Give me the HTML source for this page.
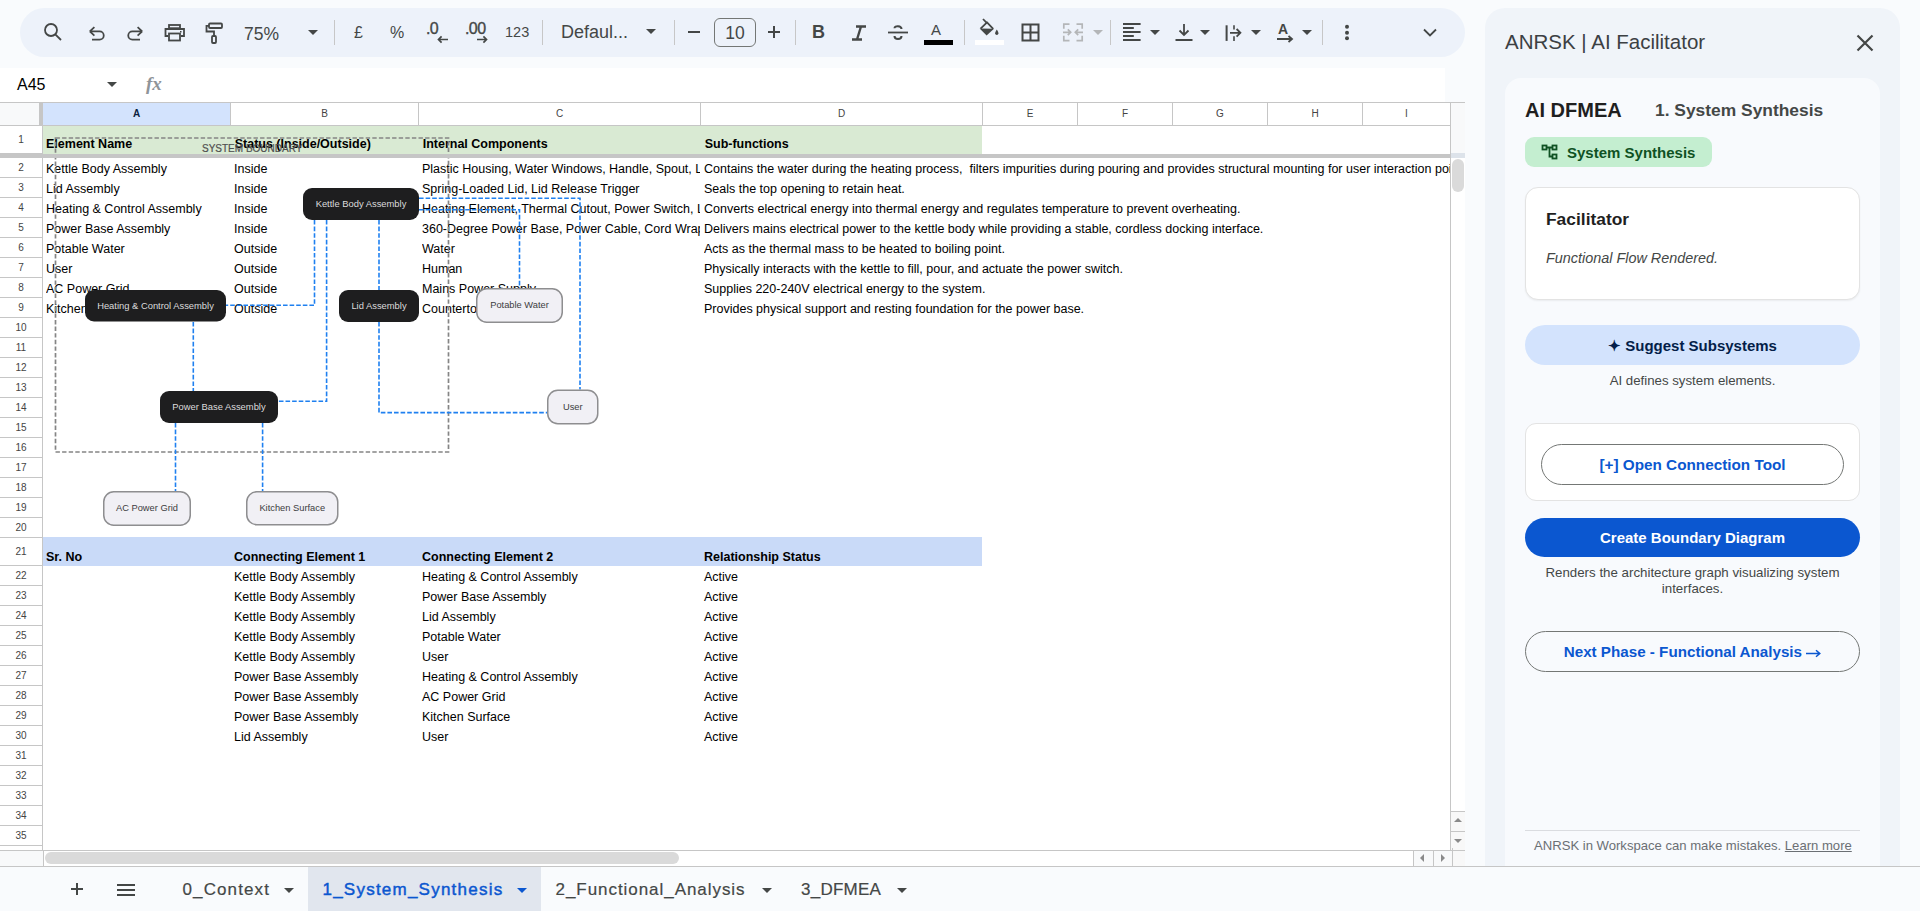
<!DOCTYPE html><html><head><meta charset="utf-8"><style>
*{box-sizing:border-box;margin:0;padding:0}
html,body{width:1920px;height:911px;overflow:hidden;background:#f9fbfd;font-family:"Liberation Sans", sans-serif;}
.a{position:absolute}
.t{position:absolute;white-space:nowrap;line-height:14px;font-size:12.5px;color:#000}
.b{font-weight:bold}
.rn{position:absolute;left:0;width:42px;text-align:center;font-size:10px;color:#444;line-height:12px}
.ch{position:absolute;top:103px;height:22px;text-align:center;font-size:10px;line-height:22px;color:#444}
.ico{position:absolute}
.dd{position:absolute;width:0;height:0;border-left:5px solid transparent;border-right:5px solid transparent;border-top:5px solid #444746}
.sep{position:absolute;top:20px;width:1px;height:25px;background:#c7c7c7}
</style></head><body>
<div class="a" style="left:20px;top:8px;width:1445px;height:49px;border-radius:25px;background:#edf2fa"></div>
<svg class="ico" style="left:43px;top:22px" width="20" height="20" viewBox="0 0 20 20"><circle cx="8" cy="8" r="6" fill="none" stroke="#444746" stroke-width="1.8"/><line x1="12.3" y1="12.3" x2="18" y2="18" stroke="#444746" stroke-width="1.8"/></svg>
<svg class="ico" style="left:88px;top:25px" width="18" height="17" viewBox="0 0 18 17"><path d="M1.8 6.4 L6.4 2.2 M1.8 6.4 L6.4 10.6 M1.8 6.4 H11.6 A4.15 4.15 0 0 1 11.6 14.7 H4" fill="none" stroke="#444746" stroke-width="1.8"/></svg>
<svg class="ico" style="left:127px;top:25px" width="18" height="17" viewBox="0 0 18 17"><path d="M15.2 6.4 L10.6 2.2 M15.2 6.4 L10.6 10.6 M15.2 6.4 H5.4 A4.15 4.15 0 0 0 5.4 14.7 H13" fill="none" stroke="#444746" stroke-width="1.8"/></svg>
<svg class="ico" style="left:164px;top:23px" width="22" height="19" viewBox="0 0 22 19"><rect x="5" y="2" width="11" height="3.2" fill="none" stroke="#444746" stroke-width="1.8"/><path d="M4 13 H1.5 V6 H20 V13 H17" fill="none" stroke="#444746" stroke-width="1.8"/><rect x="5" y="10.5" width="11" height="7" fill="none" stroke="#444746" stroke-width="1.8"/><rect x="16" y="8" width="1.5" height="1.5" fill="#444746"/></svg>
<svg class="ico" style="left:204px;top:22px" width="20" height="23" viewBox="0 0 20 23"><rect x="5" y="1.5" width="13" height="4.5" rx="1" fill="none" stroke="#444746" stroke-width="1.8"/><path d="M5 3.8 H2.5 V9.5 H10 V14" fill="none" stroke="#444746" stroke-width="1.8"/><rect x="8" y="14" width="4" height="7" rx="1" fill="none" stroke="#444746" stroke-width="1.8"/></svg>
<div class="t" style="left:244px;top:25px;font-size:17.5px;line-height:18px;color:#444746">75%</div>
<div class="dd" style="left:308px;top:30px"></div>
<div class="sep" style="left:334px"></div>
<div class="t" style="left:354px;top:24px;font-size:16px;line-height:18px;color:#444746">£</div>
<div class="t" style="left:390px;top:24px;font-size:16px;line-height:18px;color:#444746">%</div>
<div class="t" style="left:426px;top:21px;font-size:16px;line-height:16px;color:#444746;letter-spacing:-0.6px;-webkit-text-stroke:0.35px #444746">.0</div>
<svg class="ico" style="left:437px;top:35px" width="12" height="9" viewBox="0 0 12 9"><path d="M1.5 4.5 H11 M4.6 1.4 L1.5 4.5 L4.6 7.6" fill="none" stroke="#444746" stroke-width="1.7"/></svg>
<div class="t" style="left:465px;top:21px;font-size:16px;line-height:16px;color:#444746;letter-spacing:-0.6px;-webkit-text-stroke:0.35px #444746">.00</div>
<svg class="ico" style="left:476px;top:35px" width="12" height="9" viewBox="0 0 12 9"><path d="M1 4.5 H10.5 M7.4 1.4 L10.5 4.5 L7.4 7.6" fill="none" stroke="#444746" stroke-width="1.7"/></svg>
<div class="t" style="left:505px;top:24px;font-size:14.5px;line-height:16px;color:#444746">123</div>
<div class="sep" style="left:542px"></div>
<div class="t" style="left:561px;top:22px;font-size:18px;line-height:20px;color:#444746">Defaul...</div>
<div class="dd" style="left:646px;top:29px"></div>
<div class="sep" style="left:674px"></div>
<div class="a" style="left:688px;top:31px;width:12px;height:2px;background:#444746"></div>
<div class="a" style="left:714px;top:18px;width:42px;height:29px;border:1px solid #747775;border-radius:6px"></div>
<div class="t" style="left:714px;top:23px;width:42px;text-align:center;font-size:17.5px;line-height:20px;color:#444746">10</div>
<div class="a" style="left:768px;top:31px;width:12px;height:2px;background:#444746"></div>
<div class="a" style="left:773px;top:26px;width:2px;height:12px;background:#444746"></div>
<div class="sep" style="left:795px"></div>
<div class="t b" style="left:812px;top:23px;font-size:18px;line-height:18px;color:#444746">B</div>
<svg class="ico" style="left:851px;top:25px" width="16" height="16" viewBox="0 0 16 16"><path d="M5 1.5 H15 M1 14.5 H11 M10 1.5 L6 14.5" fill="none" stroke="#444746" stroke-width="2.4"/></svg>
<svg class="ico" style="left:887px;top:24px" width="22" height="17" viewBox="0 0 22 17"><line x1="1" y1="8.5" x2="21" y2="8.5" stroke="#444746" stroke-width="1.8"/><path d="M14.5 5 C14.5 1.5 7.5 1.2 7.5 4.2" fill="none" stroke="#444746" stroke-width="2"/><path d="M7.5 12 C7.5 16 14.5 16 14.5 12" fill="none" stroke="#444746" stroke-width="2"/></svg>
<div class="t" style="left:931px;top:22px;font-size:15px;line-height:16px;color:#444746">A</div>
<div class="a" style="left:924px;top:40px;width:29px;height:5px;background:#000"></div>
<div class="sep" style="left:964px"></div>
<svg class="ico" style="left:978px;top:18px" width="22" height="19" viewBox="0 0 22 19"><path d="M5 1 L9 5.2" stroke="#444746" stroke-width="1.8"/><path d="M2.6 10.6 L9 4.3 L15.2 10.8" fill="none" stroke="#444746" stroke-width="1.8" stroke-linejoin="round"/><path d="M1.6 10.6 L16 10.8 L8.6 17.6 Z" fill="#444746"/><path d="M18.8 11.5 C17.6 13.3 17.2 14.3 17.2 15.3 A1.6 1.6 0 0 0 20.4 15.3 C20.4 14.3 20 13.3 18.8 11.5 Z" fill="#444746"/></svg>
<div class="a" style="left:975px;top:40px;width:29px;height:5px;background:#fff"></div>
<svg class="ico" style="left:1021px;top:23px" width="19" height="19" viewBox="0 0 19 19"><rect x="1.5" y="1.5" width="16" height="16" fill="none" stroke="#444746" stroke-width="2"/><line x1="9.5" y1="1.5" x2="9.5" y2="17.5" stroke="#444746" stroke-width="2"/><line x1="1.5" y1="9.5" x2="17.5" y2="9.5" stroke="#444746" stroke-width="2"/></svg>
<svg class="ico" style="left:1062px;top:23px" width="22" height="19" viewBox="0 0 22 19"><g fill="none" stroke="#b4b6b8" stroke-width="1.7"><path d="M7.5 1.2 H1.8 V5.8 M1.8 12.8 V17.6 H7.5 M14.5 1.2 H20.2 V5.8 M20.2 12.8 V17.6 H14.5"/><path d="M1 9.3 H8.6 M5.8 6.4 L8.7 9.3 L5.8 12.2 M21 9.3 H13.4 M16.2 6.4 L13.3 9.3 L16.2 12.2"/></g></svg>
<div class="dd" style="left:1093px;top:30px;border-top-color:#b4b6b8"></div>
<div class="sep" style="left:1110px"></div>
<svg class="ico" style="left:1122px;top:23px" width="20" height="19" viewBox="0 0 20 19"><rect x="1" y="0" width="17.6" height="2" fill="#444746"/><rect x="1" y="4" width="10.8" height="2" fill="#444746"/><rect x="1" y="8" width="17.6" height="2" fill="#444746"/><rect x="1" y="12" width="10.8" height="2" fill="#444746"/><rect x="1" y="16" width="17.6" height="2" fill="#444746"/></svg>
<div class="dd" style="left:1150px;top:30px"></div>
<svg class="ico" style="left:1174px;top:23px" width="20" height="20" viewBox="0 0 20 20"><path d="M10 1 V12 M5.5 7.5 L10 12 L14.5 7.5" fill="none" stroke="#444746" stroke-width="1.8"/><rect x="1.5" y="16" width="17" height="2" fill="#444746"/></svg>
<div class="dd" style="left:1200px;top:30px"></div>
<svg class="ico" style="left:1224px;top:24px" width="19" height="19" viewBox="0 0 19 19"><rect x="1.6" y="1.3" width="2" height="15.6" fill="#444746"/><path d="M10 1.3 V5.6 M10 12.2 V17" stroke="#444746" stroke-width="1.6"/><path d="M6 8.8 H16.3 M12.6 5 L16.4 8.8 L12.6 12.6" fill="none" stroke="#444746" stroke-width="1.8"/></svg>
<div class="dd" style="left:1251px;top:30px"></div>
<div class="t b" style="left:1278px;top:22px;font-size:14px;line-height:14px;color:#444746">A</div>
<svg class="ico" style="left:1276px;top:35px" width="18" height="8" viewBox="0 0 18 8"><path d="M1 4 H16 M12.5 1 L16 4 L12.5 7" fill="none" stroke="#444746" stroke-width="1.8"/></svg>
<div class="dd" style="left:1302px;top:30px"></div>
<div class="sep" style="left:1322px"></div>
<svg class="ico" style="left:1343px;top:24px" width="8" height="17" viewBox="0 0 8 17"><circle cx="4" cy="2.7" r="2" fill="#444746"/><circle cx="4" cy="8.8" r="2" fill="#444746"/><circle cx="4" cy="14.2" r="2" fill="#444746"/></svg>
<svg class="ico" style="left:1422px;top:27px" width="16" height="11" viewBox="0 0 16 11"><path d="M2 2.5 L8 8.5 L14 2.5" fill="none" stroke="#444746" stroke-width="1.8"/></svg>
<div class="a" style="left:0;top:68px;width:1445px;height:34px;background:#fff"></div>
<div class="t" style="left:17px;top:77px;font-size:16px;line-height:16px;color:#000">A45</div>
<div class="dd" style="left:107px;top:82px"></div>
<div class="t" style="left:146px;top:75px;font-family:'Liberation Serif',serif;font-style:italic;font-weight:bold;font-size:19px;line-height:18px;color:#8f9499">fx</div>
<div class="a" style="left:0;top:102px;width:1465px;height:764px;background:#fff"></div>
<div class="a" style="left:0;top:102px;width:1450px;height:1px;background:#c6c6c6"></div>
<div class="a" style="left:0;top:125px;width:1450px;height:1px;background:#c6c6c6"></div>
<div class="a" style="left:0;top:103px;width:39px;height:22px;background:#f8f9fa"></div>
<div class="a" style="left:39px;top:103px;width:4px;height:22px;background:#c6c6c6"></div>
<div class="a" style="left:43px;top:103px;width:187px;height:22px;background:#d3e3fd"></div>
<div class="ch" style="left:43px;width:187px;font-weight:bold;color:#0b1f3f">A</div>
<div class="a" style="left:230px;top:103px;width:1px;height:22px;background:#c6c6c6"></div>
<div class="ch" style="left:231px;width:187px;">B</div>
<div class="a" style="left:418px;top:103px;width:1px;height:22px;background:#c6c6c6"></div>
<div class="ch" style="left:419px;width:281px;">C</div>
<div class="a" style="left:700px;top:103px;width:1px;height:22px;background:#c6c6c6"></div>
<div class="ch" style="left:701px;width:281px;">D</div>
<div class="a" style="left:982px;top:103px;width:1px;height:22px;background:#c6c6c6"></div>
<div class="ch" style="left:983px;width:94px;">E</div>
<div class="a" style="left:1077px;top:103px;width:1px;height:22px;background:#c6c6c6"></div>
<div class="ch" style="left:1078px;width:94px;">F</div>
<div class="a" style="left:1172px;top:103px;width:1px;height:22px;background:#c6c6c6"></div>
<div class="ch" style="left:1173px;width:94px;">G</div>
<div class="a" style="left:1267px;top:103px;width:1px;height:22px;background:#c6c6c6"></div>
<div class="ch" style="left:1268px;width:94px;">H</div>
<div class="a" style="left:1362px;top:103px;width:1px;height:22px;background:#c6c6c6"></div>
<div class="ch" style="left:1363px;width:87px;">I</div>
<div class="a" style="left:1450px;top:102px;width:1px;height:764px;background:#c6c6c6"></div>
<div class="a" style="left:1451px;top:103px;width:14px;height:51px;background:#f8f9fa"></div>
<div class="a" style="left:1451px;top:811px;width:14px;height:55px;background:#f8f8f8"></div>
<div class="a" style="left:1450px;top:102px;width:15px;height:1px;background:#c6c6c6"></div>
<div class="a" style="left:42px;top:125px;width:1px;height:725px;background:#c6c6c6"></div>
<div class="a" style="left:0;top:153px;width:42px;height:1px;background:#c6c6c6"></div>
<div class="rn" style="top:134.4px">1</div>
<div class="a" style="left:0;top:177px;width:42px;height:1px;background:#c6c6c6"></div>
<div class="rn" style="top:162.4px">2</div>
<div class="a" style="left:0;top:197px;width:42px;height:1px;background:#c6c6c6"></div>
<div class="rn" style="top:182.4px">3</div>
<div class="a" style="left:0;top:217px;width:42px;height:1px;background:#c6c6c6"></div>
<div class="rn" style="top:202.4px">4</div>
<div class="a" style="left:0;top:237px;width:42px;height:1px;background:#c6c6c6"></div>
<div class="rn" style="top:222.4px">5</div>
<div class="a" style="left:0;top:257px;width:42px;height:1px;background:#c6c6c6"></div>
<div class="rn" style="top:242.4px">6</div>
<div class="a" style="left:0;top:277px;width:42px;height:1px;background:#c6c6c6"></div>
<div class="rn" style="top:262.4px">7</div>
<div class="a" style="left:0;top:297px;width:42px;height:1px;background:#c6c6c6"></div>
<div class="rn" style="top:282.4px">8</div>
<div class="a" style="left:0;top:317px;width:42px;height:1px;background:#c6c6c6"></div>
<div class="rn" style="top:302.4px">9</div>
<div class="a" style="left:0;top:337px;width:42px;height:1px;background:#c6c6c6"></div>
<div class="rn" style="top:322.4px">10</div>
<div class="a" style="left:0;top:357px;width:42px;height:1px;background:#c6c6c6"></div>
<div class="rn" style="top:342.4px">11</div>
<div class="a" style="left:0;top:377px;width:42px;height:1px;background:#c6c6c6"></div>
<div class="rn" style="top:362.4px">12</div>
<div class="a" style="left:0;top:397px;width:42px;height:1px;background:#c6c6c6"></div>
<div class="rn" style="top:382.4px">13</div>
<div class="a" style="left:0;top:417px;width:42px;height:1px;background:#c6c6c6"></div>
<div class="rn" style="top:402.4px">14</div>
<div class="a" style="left:0;top:437px;width:42px;height:1px;background:#c6c6c6"></div>
<div class="rn" style="top:422.4px">15</div>
<div class="a" style="left:0;top:457px;width:42px;height:1px;background:#c6c6c6"></div>
<div class="rn" style="top:442.4px">16</div>
<div class="a" style="left:0;top:477px;width:42px;height:1px;background:#c6c6c6"></div>
<div class="rn" style="top:462.4px">17</div>
<div class="a" style="left:0;top:497px;width:42px;height:1px;background:#c6c6c6"></div>
<div class="rn" style="top:482.4px">18</div>
<div class="a" style="left:0;top:517px;width:42px;height:1px;background:#c6c6c6"></div>
<div class="rn" style="top:502.4px">19</div>
<div class="a" style="left:0;top:537px;width:42px;height:1px;background:#c6c6c6"></div>
<div class="rn" style="top:522.4px">20</div>
<div class="a" style="left:0;top:565px;width:42px;height:1px;background:#c6c6c6"></div>
<div class="rn" style="top:546.4px">21</div>
<div class="a" style="left:0;top:585px;width:42px;height:1px;background:#c6c6c6"></div>
<div class="rn" style="top:570.4px">22</div>
<div class="a" style="left:0;top:605px;width:42px;height:1px;background:#c6c6c6"></div>
<div class="rn" style="top:590.4px">23</div>
<div class="a" style="left:0;top:625px;width:42px;height:1px;background:#c6c6c6"></div>
<div class="rn" style="top:610.4px">24</div>
<div class="a" style="left:0;top:645px;width:42px;height:1px;background:#c6c6c6"></div>
<div class="rn" style="top:630.4px">25</div>
<div class="a" style="left:0;top:665px;width:42px;height:1px;background:#c6c6c6"></div>
<div class="rn" style="top:650.4px">26</div>
<div class="a" style="left:0;top:685px;width:42px;height:1px;background:#c6c6c6"></div>
<div class="rn" style="top:670.4px">27</div>
<div class="a" style="left:0;top:705px;width:42px;height:1px;background:#c6c6c6"></div>
<div class="rn" style="top:690.4px">28</div>
<div class="a" style="left:0;top:725px;width:42px;height:1px;background:#c6c6c6"></div>
<div class="rn" style="top:710.4px">29</div>
<div class="a" style="left:0;top:745px;width:42px;height:1px;background:#c6c6c6"></div>
<div class="rn" style="top:730.4px">30</div>
<div class="a" style="left:0;top:765px;width:42px;height:1px;background:#c6c6c6"></div>
<div class="rn" style="top:750.4px">31</div>
<div class="a" style="left:0;top:785px;width:42px;height:1px;background:#c6c6c6"></div>
<div class="rn" style="top:770.4px">32</div>
<div class="a" style="left:0;top:805px;width:42px;height:1px;background:#c6c6c6"></div>
<div class="rn" style="top:790.4px">33</div>
<div class="a" style="left:0;top:825px;width:42px;height:1px;background:#c6c6c6"></div>
<div class="rn" style="top:810.4px">34</div>
<div class="a" style="left:0;top:845px;width:42px;height:1px;background:#c6c6c6"></div>
<div class="rn" style="top:830.4px">35</div>
<div class="a" style="left:43px;top:126px;width:939px;height:28px;background:#d9ead3"></div>
<div class="a" style="left:43px;top:537px;width:939px;height:29px;background:#c9daf8"></div>
<div class="t b" style="left:46.0px;top:137.0px;">Element Name</div>
<div class="t b" style="left:234.7px;top:137.0px;">Status (Inside/Outside)</div>
<div class="t b" style="left:422.7px;top:137.0px;">Internal Components</div>
<div class="t b" style="left:704.7px;top:137.0px;">Sub-functions</div>
<div class="t" style="left:46.0px;top:162.0px;width:184.0px;overflow:hidden;">Kettle Body Assembly</div>
<div class="t" style="left:234.0px;top:162.0px;width:184.0px;overflow:hidden;">Inside</div>
<div class="t" style="left:422.0px;top:162.0px;width:278.0px;overflow:hidden;">Plastic Housing, Water Windows, Handle, Spout, Limescale Filter</div>
<div class="t" style="left:704.0px;top:162.0px;width:746.0px;overflow:hidden;">Contains the water during the heating process,&nbsp; filters impurities during pouring and provides structural mounting for user interaction points.</div>
<div class="t" style="left:46.0px;top:182.0px;width:184.0px;overflow:hidden;">Lid Assembly</div>
<div class="t" style="left:234.0px;top:182.0px;width:184.0px;overflow:hidden;">Inside</div>
<div class="t" style="left:422.0px;top:182.0px;width:278.0px;overflow:hidden;">Spring-Loaded Lid, Lid Release Trigger</div>
<div class="t" style="left:704.0px;top:182.0px;width:746.0px;overflow:hidden;">Seals the top opening to retain heat.</div>
<div class="t" style="left:46.0px;top:202.0px;width:184.0px;overflow:hidden;">Heating &amp; Control Assembly</div>
<div class="t" style="left:234.0px;top:202.0px;width:184.0px;overflow:hidden;">Inside</div>
<div class="t" style="left:422.0px;top:202.0px;width:278.0px;overflow:hidden;">Heating Element, Thermal Cutout, Power Switch, LED Indicator</div>
<div class="t" style="left:704.0px;top:202.0px;width:746.0px;overflow:hidden;">Converts electrical energy into thermal energy and regulates temperature to prevent overheating.</div>
<div class="t" style="left:46.0px;top:222.0px;width:184.0px;overflow:hidden;">Power Base Assembly</div>
<div class="t" style="left:234.0px;top:222.0px;width:184.0px;overflow:hidden;">Inside</div>
<div class="t" style="left:422.0px;top:222.0px;width:278.0px;overflow:hidden;">360-Degree Power Base, Power Cable, Cord Wrap</div>
<div class="t" style="left:704.0px;top:222.0px;width:746.0px;overflow:hidden;">Delivers mains electrical power to the kettle body while providing a stable, cordless docking interface.</div>
<div class="t" style="left:46.0px;top:242.0px;width:184.0px;overflow:hidden;">Potable Water</div>
<div class="t" style="left:234.0px;top:242.0px;width:184.0px;overflow:hidden;">Outside</div>
<div class="t" style="left:422.0px;top:242.0px;width:278.0px;overflow:hidden;">Water</div>
<div class="t" style="left:704.0px;top:242.0px;width:746.0px;overflow:hidden;">Acts as the thermal mass to be heated to boiling point.</div>
<div class="t" style="left:46.0px;top:262.0px;width:184.0px;overflow:hidden;">User</div>
<div class="t" style="left:234.0px;top:262.0px;width:184.0px;overflow:hidden;">Outside</div>
<div class="t" style="left:422.0px;top:262.0px;width:278.0px;overflow:hidden;">Human</div>
<div class="t" style="left:704.0px;top:262.0px;width:746.0px;overflow:hidden;">Physically interacts with the kettle to fill, pour, and actuate the power switch.</div>
<div class="t" style="left:46.0px;top:282.0px;width:184.0px;overflow:hidden;">AC Power Grid</div>
<div class="t" style="left:234.0px;top:282.0px;width:184.0px;overflow:hidden;">Outside</div>
<div class="t" style="left:422.0px;top:282.0px;width:278.0px;overflow:hidden;">Mains Power Supply</div>
<div class="t" style="left:704.0px;top:282.0px;width:746.0px;overflow:hidden;">Supplies 220-240V electrical energy to the system.</div>
<div class="t" style="left:46.0px;top:302.0px;width:184.0px;overflow:hidden;">Kitchen Surface</div>
<div class="t" style="left:234.0px;top:302.0px;width:184.0px;overflow:hidden;">Outside</div>
<div class="t" style="left:422.0px;top:302.0px;width:278.0px;overflow:hidden;">Countertop</div>
<div class="t" style="left:704.0px;top:302.0px;width:746.0px;overflow:hidden;">Provides physical support and resting foundation for the power base.</div>
<div class="t b" style="left:46.0px;top:549.6px;">Sr. No</div>
<div class="t b" style="left:234.0px;top:549.6px;">Connecting Element 1</div>
<div class="t b" style="left:422.0px;top:549.6px;">Connecting Element 2</div>
<div class="t b" style="left:704.0px;top:549.6px;">Relationship Status</div>
<div class="t" style="left:234.0px;top:570.0px;">Kettle Body Assembly</div>
<div class="t" style="left:422.0px;top:570.0px;">Heating &amp; Control Assembly</div>
<div class="t" style="left:704.0px;top:570.0px;">Active</div>
<div class="t" style="left:234.0px;top:590.0px;">Kettle Body Assembly</div>
<div class="t" style="left:422.0px;top:590.0px;">Power Base Assembly</div>
<div class="t" style="left:704.0px;top:590.0px;">Active</div>
<div class="t" style="left:234.0px;top:610.0px;">Kettle Body Assembly</div>
<div class="t" style="left:422.0px;top:610.0px;">Lid Assembly</div>
<div class="t" style="left:704.0px;top:610.0px;">Active</div>
<div class="t" style="left:234.0px;top:630.0px;">Kettle Body Assembly</div>
<div class="t" style="left:422.0px;top:630.0px;">Potable Water</div>
<div class="t" style="left:704.0px;top:630.0px;">Active</div>
<div class="t" style="left:234.0px;top:650.0px;">Kettle Body Assembly</div>
<div class="t" style="left:422.0px;top:650.0px;">User</div>
<div class="t" style="left:704.0px;top:650.0px;">Active</div>
<div class="t" style="left:234.0px;top:670.0px;">Power Base Assembly</div>
<div class="t" style="left:422.0px;top:670.0px;">Heating &amp; Control Assembly</div>
<div class="t" style="left:704.0px;top:670.0px;">Active</div>
<div class="t" style="left:234.0px;top:690.0px;">Power Base Assembly</div>
<div class="t" style="left:422.0px;top:690.0px;">AC Power Grid</div>
<div class="t" style="left:704.0px;top:690.0px;">Active</div>
<div class="t" style="left:234.0px;top:710.0px;">Power Base Assembly</div>
<div class="t" style="left:422.0px;top:710.0px;">Kitchen Surface</div>
<div class="t" style="left:704.0px;top:710.0px;">Active</div>
<div class="t" style="left:234.0px;top:730.0px;">Lid Assembly</div>
<div class="t" style="left:422.0px;top:730.0px;">User</div>
<div class="t" style="left:704.0px;top:730.0px;">Active</div>
<svg class="a" style="left:0;top:0" width="1450" height="850" viewBox="0 0 1450 850"><rect x="55.5" y="138" width="393" height="314" fill="none" stroke="#858585" stroke-width="1.7" stroke-dasharray="4.4 2.2"/><text x="202" y="152.3" font-family="Liberation Sans" font-size="10" fill="#505050" stroke="#505050" stroke-width="0.2">SYSTEM BOUNDARY</text><path d="M314.5 220 V305.3 H226" fill="none" stroke="#1f80f0" stroke-width="1.6" stroke-dasharray="4.6 2"/><path d="M326.6 220 V401.3 H278" fill="none" stroke="#1f80f0" stroke-width="1.6" stroke-dasharray="4.6 2"/><path d="M379 220 V290" fill="none" stroke="#1f80f0" stroke-width="1.6" stroke-dasharray="4.6 2"/><path d="M419 209.7 H519.5 V288" fill="none" stroke="#1f80f0" stroke-width="1.6" stroke-dasharray="4.6 2"/><path d="M419 198.2 H580 V389.5" fill="none" stroke="#1f80f0" stroke-width="1.6" stroke-dasharray="4.6 2"/><path d="M193.3 322 V391" fill="none" stroke="#1f80f0" stroke-width="1.6" stroke-dasharray="4.6 2"/><path d="M175.5 423 V491" fill="none" stroke="#1f80f0" stroke-width="1.6" stroke-dasharray="4.6 2"/><path d="M262.6 423 V491" fill="none" stroke="#1f80f0" stroke-width="1.6" stroke-dasharray="4.6 2"/><path d="M379 322 V412.6 H547" fill="none" stroke="#1f80f0" stroke-width="1.6" stroke-dasharray="4.6 2"/><rect x="303" y="188" width="116" height="32" rx="9" fill="#1e1e1f"/><text x="361.0" y="206.9" text-anchor="middle" font-family="Liberation Sans" font-size="9.4" fill="#dcdcdc">Kettle Body Assembly</text><rect x="85" y="290" width="141" height="31.5" rx="9" fill="#1e1e1f"/><text x="155.5" y="308.65" text-anchor="middle" font-family="Liberation Sans" font-size="9.4" fill="#dcdcdc">Heating &amp; Control Assembly</text><rect x="339" y="290" width="80" height="32" rx="9" fill="#1e1e1f"/><text x="379.0" y="308.9" text-anchor="middle" font-family="Liberation Sans" font-size="9.4" fill="#dcdcdc">Lid Assembly</text><rect x="160" y="391" width="118" height="32" rx="9" fill="#1e1e1f"/><text x="219.0" y="409.9" text-anchor="middle" font-family="Liberation Sans" font-size="9.4" fill="#dcdcdc">Power Base Assembly</text><rect x="476.75" y="288.75" width="85.5" height="33.5" rx="10" fill="#f1f0f5" stroke="#8e8e90" stroke-width="1.5"/><text x="519.5" y="308.2" text-anchor="middle" font-family="Liberation Sans" font-size="9.3" fill="#3c3c3e">Potable Water</text><rect x="547.75" y="390.25" width="50.0" height="33.5" rx="10" fill="#f1f0f5" stroke="#8e8e90" stroke-width="1.5"/><text x="572.75" y="409.7" text-anchor="middle" font-family="Liberation Sans" font-size="9.3" fill="#3c3c3e">User</text><rect x="103.75" y="491.75" width="86.5" height="33.5" rx="10" fill="#f1f0f5" stroke="#8e8e90" stroke-width="1.5"/><text x="147.0" y="511.2" text-anchor="middle" font-family="Liberation Sans" font-size="9.3" fill="#3c3c3e">AC Power Grid</text><rect x="246.75" y="491.75" width="91.0" height="33.0" rx="10" fill="#f1f0f5" stroke="#8e8e90" stroke-width="1.5"/><text x="292.25" y="510.95" text-anchor="middle" font-family="Liberation Sans" font-size="9.3" fill="#3c3c3e">Kitchen Surface</text></svg>
<div class="a" style="left:0;top:154px;width:1450px;height:4px;background:#c6c6c6"></div>
<div class="a" style="left:1451px;top:153px;width:14px;height:5px;background:#dde3ea"></div>
<div class="a" style="left:1452px;top:159px;width:12px;height:33px;border-radius:6px;background:#dadada"></div>
<div class="a" style="left:1451px;top:811px;width:14px;height:1px;background:#c6c6c6"></div>
<div class="a" style="left:1451px;top:831px;width:14px;height:1px;background:#c6c6c6"></div>
<div class="a" style="left:1451px;top:850px;width:14px;height:1px;background:#c6c6c6"></div>
<div class="a" style="left:1454px;top:818px;width:0;height:0;border-left:4px solid transparent;border-right:4px solid transparent;border-bottom:4px solid #8a8a8a"></div>
<div class="a" style="left:1454px;top:839px;width:0;height:0;border-left:4px solid transparent;border-right:4px solid transparent;border-top:4px solid #8a8a8a"></div>
<div class="a" style="left:0;top:850px;width:1465px;height:1px;background:#c6c6c6"></div>
<div class="a" style="left:0;top:851px;width:43px;height:15px;background:#f8f9fa"></div>
<div class="a" style="left:43px;top:851px;width:1px;height:15px;background:#c6c6c6"></div>
<div class="a" style="left:45px;top:852px;width:634px;height:12px;border-radius:6px;background:#dadada"></div>
<div class="a" style="left:1413px;top:851px;width:38px;height:15px;background:#f8f9fa"></div>
<div class="a" style="left:1413px;top:851px;width:1px;height:15px;background:#c6c6c6"></div>
<div class="a" style="left:1433px;top:851px;width:1px;height:15px;background:#c6c6c6"></div>
<div class="a" style="left:1452px;top:848px;width:1px;height:18px;background:#c6c6c6"></div>
<div class="a" style="left:1420px;top:854px;width:0;height:0;border-top:4px solid transparent;border-bottom:4px solid transparent;border-right:4px solid #8a8a8a"></div>
<div class="a" style="left:1441px;top:854px;width:0;height:0;border-top:4px solid transparent;border-bottom:4px solid transparent;border-left:4px solid #8a8a8a"></div>
<div class="a" style="left:0;top:866px;width:1920px;height:1px;background:#c6c6c6"></div>
<div class="a" style="left:0;top:867px;width:1920px;height:44px;background:#f9fbfd"></div>
<div class="a" style="left:71px;top:888px;width:12px;height:2px;background:#444746"></div>
<div class="a" style="left:76px;top:883px;width:2px;height:12px;background:#444746"></div>
<div class="a" style="left:117px;top:884px;width:18px;height:2px;background:#444746"></div>
<div class="a" style="left:117px;top:889px;width:18px;height:2px;background:#444746"></div>
<div class="a" style="left:117px;top:893.5px;width:18px;height:2px;background:#444746"></div>
<div class="a" style="left:308px;top:867px;width:233px;height:44px;background:#e1e6ee"></div>
<div class="t" style="left:182.5px;top:880px;font-size:17px;line-height:20px;letter-spacing:1.12px;color:#444746;-webkit-text-stroke:0.2px #444746">0_Context</div>
<div class="dd" style="left:284px;top:888px;border-top-color:#444746"></div>
<div class="t" style="left:322.5px;top:880px;font-size:17px;line-height:20px;letter-spacing:1.23px;color:#0b57d0;-webkit-text-stroke:0.45px #0b57d0">1_System_Synthesis</div>
<div class="dd" style="left:517px;top:888px;border-top-color:#0b57d0"></div>
<div class="t" style="left:555.5px;top:880px;font-size:17px;line-height:20px;letter-spacing:0.95px;color:#444746;-webkit-text-stroke:0.2px #444746">2_Functional_Analysis</div>
<div class="dd" style="left:762px;top:888px;border-top-color:#444746"></div>
<div class="t" style="left:801px;top:880px;font-size:17px;line-height:20px;letter-spacing:0.25px;color:#444746;-webkit-text-stroke:0.2px #444746">3_DFMEA</div>
<div class="dd" style="left:897px;top:888px;border-top-color:#444746"></div>
<div class="a" style="left:1485px;top:8px;width:415px;height:900px;border-radius:20px;background:#f0f4f9"></div>
<div class="t" style="left:1505px;top:31px;font-size:20.5px;line-height:22px;color:#3c4043">ANRSK | AI Facilitator</div>
<svg class="ico" style="left:1855px;top:33px" width="20" height="20" viewBox="0 0 20 20"><path d="M2.5 2.5 L17.5 17.5 M17.5 2.5 L2.5 17.5" stroke="#444746" stroke-width="2.2"/></svg>
<div class="a" style="left:1505px;top:78px;width:375px;height:830px;border-radius:16px;background:#f8fafd"></div>
<div class="t b" style="left:1525px;top:99px;font-size:20px;line-height:22px;color:#1f1f1f">AI DFMEA</div>
<div class="t b" style="left:1655px;top:100px;font-size:17.4px;line-height:20px;color:#444746">1. System Synthesis</div>
<div class="a" style="left:1525px;top:137px;width:187px;height:30px;border-radius:9px;background:#c4eed0"></div>
<svg class="ico" style="left:1541px;top:144px" width="18" height="16" viewBox="0 0 18 16"><g fill="none" stroke="#0f5223" stroke-width="1.8"><rect x="1.5" y="1.5" width="4" height="4"/><rect x="11.5" y="1.5" width="4" height="4"/><rect x="11.5" y="10.5" width="4" height="4"/><path d="M5.5 3.5 H11.5 M8.5 3.5 V12.5 H11.5"/></g></svg>
<div class="t b" style="left:1567px;top:144px;font-size:15px;line-height:17px;color:#0f5223">System Synthesis</div>
<div class="a" style="left:1525px;top:187px;width:335px;height:113px;border-radius:13px;background:#fff;border:1px solid #e3e3e3;box-shadow:0 1px 2px rgba(0,0,0,0.06)"></div>
<div class="t b" style="left:1546px;top:209px;font-size:17.4px;line-height:20px;color:#1f1f1f">Facilitator</div>
<div class="t" style="left:1546px;top:250px;font-size:14.4px;line-height:17px;font-style:italic;color:#444746">Functional Flow Rendered.</div>
<div class="a" style="left:1525px;top:325px;width:335px;height:40px;border-radius:20px;background:#d3e3fd"></div>
<div class="t b" style="left:1525px;top:337px;width:335px;text-align:center;font-size:15px;line-height:17px;color:#041e49">✦ Suggest Subsystems</div>
<div class="t" style="left:1525px;top:373px;width:335px;text-align:center;font-size:13.25px;line-height:15px;color:#444746">AI defines system elements.</div>
<div class="a" style="left:1525px;top:423px;width:335px;height:78px;border-radius:11px;background:#fff;border:1px solid #e3e3e3"></div>
<div class="a" style="left:1541px;top:444px;width:303px;height:41px;border-radius:21px;background:#fff;border:1px solid #747775"></div>
<div class="t b" style="left:1541px;top:456px;width:303px;text-align:center;font-size:15.3px;line-height:17px;color:#0b57d0">[+] Open Connection Tool</div>
<div class="a" style="left:1525px;top:518px;width:335px;height:39px;border-radius:20px;background:#0b57d0"></div>
<div class="t b" style="left:1525px;top:529px;width:335px;text-align:center;font-size:15px;line-height:17px;color:#fff">Create Boundary Diagram</div>
<div class="t" style="left:1525px;top:565px;width:335px;text-align:center;white-space:normal;font-size:13.3px;line-height:16px;color:#444746">Renders the architecture graph visualizing system interfaces.</div>
<div class="a" style="left:1525px;top:631px;width:335px;height:41px;border-radius:21px;border:1px solid #747775"></div>
<div class="t b" style="left:1525px;top:643px;width:335px;text-align:center;font-size:15.2px;line-height:17px;color:#0b57d0">Next Phase - Functional Analysis <svg width="15" height="9" viewBox="0 0 15 9" style="vertical-align:-1px"><path d="M0 4.5 H13.5 M10 1.2 L13.8 4.5 L10 7.8" fill="none" stroke="#0b57d0" stroke-width="1.5"/></svg></div>
<div class="a" style="left:1525px;top:830px;width:335px;height:1px;background:#dadce0"></div>
<div class="t" style="left:1534px;top:838px;font-size:13.1px;line-height:15px;color:#6b6f74">ANRSK in Workspace can make mistakes. <span style="text-decoration:underline">Learn more</span></div>
<div class="a" style="left:1465px;top:866px;width:455px;height:1px;background:#c6c6c6"></div>
<div class="a" style="left:1465px;top:867px;width:455px;height:44px;background:#f9fbfd"></div>
</body></html>
